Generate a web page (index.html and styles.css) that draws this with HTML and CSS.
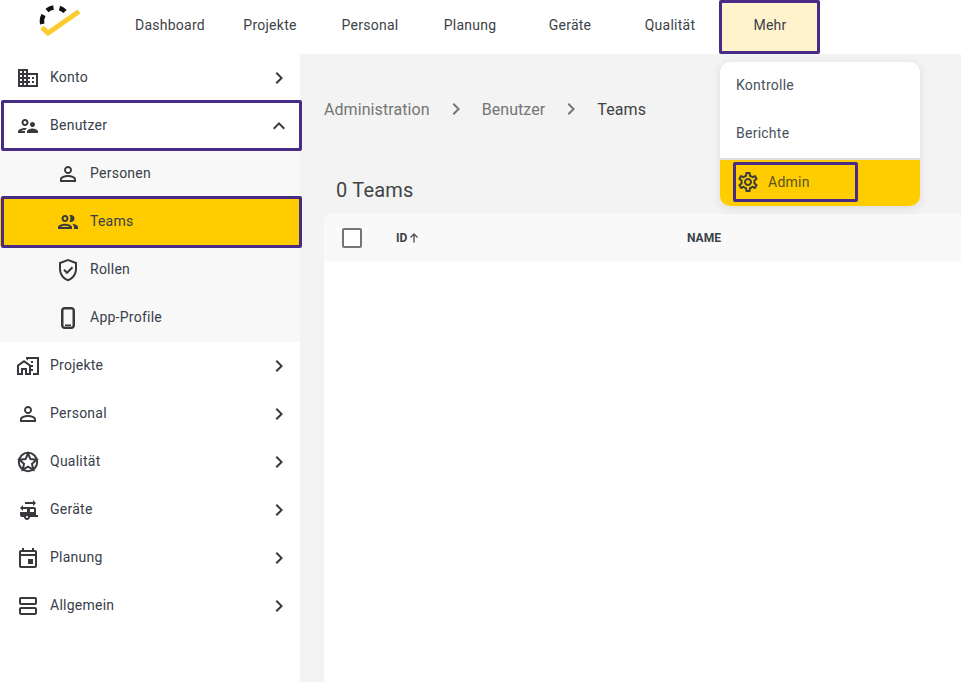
FILE: index.html
```html
<!DOCTYPE html>
<html lang="de">
<head>
<meta charset="utf-8">
<title>Teams</title>
<link rel="stylesheet" href="styles.css">
</head>
<body>
<svg class="defs" width="0" height="0" aria-hidden="true">
  <symbol id="i-chev" viewBox="0 0 24 24"><path d="M10 6 8.590 7.410 13.170 12l-4.580 4.590L10 18l6-6z"/></symbol>
</svg>
<header class="topbar">
  <div class="logo">
    <svg width="48" height="40" viewBox="0 0 48 40">
      <path class="logo-check" d="M8 27.500 L14 33 L45 11.500"/>
      <path class="logo-arc" d="M8.300 24 A13 13 0 0 1 9.500 15 M13 10.500 A13 13 0 0 1 19.500 7.500 M25.500 8 A13 13 0 0 1 31 11.500"/>
    </svg>
  </div>
  <nav class="topnav">
    <a class="topnav-item">Dashboard</a>
    <a class="topnav-item">Projekte</a>
    <a class="topnav-item">Personal</a>
    <a class="topnav-item">Planung</a>
    <a class="topnav-item">Geräte</a>
    <a class="topnav-item">Qualität</a>
    <a class="topnav-item is-open callout">Mehr
      <div class="dropdown">
        <div class="dropdown-item">Kontrolle</div>
        <div class="dropdown-item">Berichte</div>
        <div class="dropdown-admin">
          <div class="admin-link callout">
            <svg class="icon" viewBox="0 0 24 24"><path d="M19.430 12.980c.04-.32.07-.64.07-.98 0-.34-.03-.66-.07-.98l2.110-1.650c.19-.15.24-.42.12-.64l-2-3.460c-.09-.16-.26-.25-.44-.25-.06 0-.12.01-.17.03l-2.490 1c-.52-.4-1.080-.73-1.690-.98l-.38-2.650C14.460 2.180 14.250 2 14 2h-4c-.25 0-.46.18-.49.42l-.38 2.650c-.61.25-1.170.59-1.690.98l-2.490-1c-.06-.02-.12-.03-.18-.03-.17 0-.34.09-.43.25l-2 3.460c-.13.22-.07.49.12.64l2.110 1.650c-.04.32-.07.65-.07.98 0 .33.03.66.07.98l-2.110 1.650c-.19.15-.24.42-.12.64l2 3.460c.09.16.26.25.44.25.06 0 .12-.01.17-.03l2.490-1c.52.4 1.080.73 1.690.98l.38 2.650c.03.24.24.42.49.42h4c.25 0 .46-.18.49-.42l.38-2.650c.61-.25 1.170-.59 1.690-.98l2.490 1c.06.02.12.03.18.03.17 0 .34-.09.43-.25l2-3.460c.12-.22.07-.49-.12-.64l-2.110-1.650zm-1.980-1.710c.04.31.05.52.05.73 0 .21-.02.43-.05.73l-.14 1.130.89.7 1.080.84-.7 1.210-1.270-.51-1.040-.42-.9.68c-.43.32-.84.56-1.250.73l-1.060.43-.16 1.130-.2 1.350h-1.400l-.19-1.350-.16-1.130-1.060-.43c-.43-.18-.83-.41-1.230-.71l-.91-.7-1.060.43-1.270.51-.7-1.210 1.080-.84.89-.7-.14-1.130c-.03-.31-.05-.54-.05-.74s.02-.43.05-.73l.14-1.130-.89-.7-1.080-.84.7-1.210 1.270.51 1.040.42.9-.68c.43-.32.84-.56 1.250-.73l1.060-.43.16-1.130.2-1.350h1.390l.19 1.350.16 1.130 1.060.43c.43.18.83.41 1.230.71l.91.7 1.060-.43 1.270-.51.7 1.210-1.070.85-.89.7.14 1.130zM12 8c-2.210 0-4 1.790-4 4s1.790 4 4 4 4-1.790 4-4-1.790-4-4-4zm0 6c-1.100 0-2-.9-2-2s.9-2 2-2 2 .9 2 2-.9 2-2 2z"/></svg>
            <span>Admin</span>
          </div>
        </div>
      </div>
    </a>
  </nav>
</header>
<div class="main">
  <aside class="sidebar">
    <div class="row">
      <svg class="icon" viewBox="0 0 24 24"><path d="M12 7V3H2v18h20V7H12zM6 19H4v-2h2v2zm0-4H4v-2h2v2zm0-4H4V9h2v2zm0-4H4V5h2v2zm4 12H8v-2h2v2zm0-4H8v-2h2v2zm0-4H8V9h2v2zm0-4H8V5h2v2zm10 12h-8v-2h2v-2h-2v-2h2v-2h-2V9h8v10zm-2-8h-2v2h2v-2zm0 4h-2v2h2v-2z"/></svg>
      <span class="row-label">Konto</span>
      <svg class="icon chev"><use href="#i-chev"/></svg>
    </div>
    <div class="row callout">
      <svg class="icon" viewBox="0 0 24 24"><path d="M9 12c1.930 0 3.500-1.570 3.500-3.500S10.930 5 9 5 5.500 6.570 5.500 8.500 7.070 12 9 12zm0-5c.83 0 1.500.67 1.500 1.500S9.830 10 9 10s-1.500-.67-1.500-1.500S8.170 7 9 7zm.05 10H4.770c.99-.5 2.700-1 4.230-1 .11 0 .23.01.34.01.34-.73.93-1.330 1.640-1.810-.73-.13-1.420-.2-1.980-.2-2.340 0-7 1.170-7 3.500V19h7v-1.500c0-.17.02-.34.05-.5zm7.450-2.500c-1.840 0-5.500 1.010-5.500 3V19h11v-1.500c0-1.990-3.660-3-5.500-3zm1.210-1.820c.76-.43 1.290-1.240 1.290-2.180C19 9.120 17.880 8 16.500 8S14 9.120 14 10.500c0 .94.53 1.750 1.290 2.180.36.2.77.32 1.210.32s.85-.12 1.210-.32z"/></svg>
      <span class="row-label">Benutzer</span>
      <svg class="icon chev" viewBox="0 0 24 24"><path d="M12 8l-6 6 1.410 1.410L12 10.830l4.590 4.580L18 14z"/></svg>
    </div>
    <div class="submenu">
      <div class="row sub">
        <svg class="icon" viewBox="0 0 24 24"><path d="M12 5.900c1.160 0 2.100.94 2.100 2.100s-.94 2.100-2.100 2.100S9.900 9.160 9.900 8s.94-2.100 2.100-2.100m0 9c2.970 0 6.100 1.460 6.100 2.100v1.100H5.900V17c0-.64 3.130-2.100 6.100-2.100M12 4C9.790 4 8 5.790 8 8s1.790 4 4 4 4-1.790 4-4-1.790-4-4-4zm0 9c-2.670 0-8 1.340-8 4v3h16v-3c0-2.660-5.330-4-8-4z"/></svg>
        <span class="row-label">Personen</span>
      </div>
      <div class="row sub is-active callout">
        <svg class="icon" viewBox="0 0 24 24"><path d="M9 13.750c-2.340 0-7 1.170-7 3.500V19h14v-1.750c0-2.330-4.660-3.500-7-3.500zM4.340 17c.84-.58 2.870-1.250 4.660-1.250s3.820.67 4.660 1.250H4.340zM9 12c1.930 0 3.500-1.570 3.500-3.500S10.930 5 9 5 5.500 6.570 5.500 8.500 7.070 12 9 12zm0-5c.83 0 1.500.67 1.500 1.500S9.830 10 9 10s-1.500-.67-1.500-1.500S8.170 7 9 7zm7.040 6.810c1.160.84 1.960 1.960 1.960 3.440V19h4v-1.750c0-2.020-3.500-3.170-5.960-3.440zM15 12c1.930 0 3.500-1.570 3.500-3.500S16.930 5 15 5c-.54 0-1.040.13-1.500.35.63.89 1 1.980 1 3.150s-.37 2.260-1 3.150c.46.22.96.35 1.500.35z"/></svg>
        <span class="row-label">Teams</span>
      </div>
      <div class="row sub">
        <svg class="icon" viewBox="0 0 24 24"><path d="M12 1 3 4.300v6.800c0 5.600 3.800 10.800 9 12.100 5.200-1.300 9-6.500 9-12.100V4.300L12 1zm7 10.100c0 4.600-3 8.800-7 10-4-1.200-7-5.400-7-10V5.700l7-2.600 7 2.600v5.400z"/><path class="line" d="M8 11.800l3 3 5.500-5.500"/></svg>
        <span class="row-label">Rollen</span>
      </div>
      <div class="row sub">
        <svg class="icon" viewBox="0 0 24 24"><path d="M8.500 1h7C17.400 1 19 2.600 19 4.500v15c0 1.900-1.600 3.500-3.500 3.500h-7C6.600 23 5 21.400 5 19.500v-15C5 2.600 6.600 1 8.500 1zm0 2.500c-.6 0-1 .4-1 1v15c0 .6.4 1 1 1h7c.6 0 1-.4 1-1v-15c0-.6-.4-1-1-1h-7zm.5 15h6v1.500H9z"/></svg>
        <span class="row-label">App-Profile</span>
      </div>
    </div>
    <div class="row">
      <svg class="icon" viewBox="0 0 24 24"><path d="M1 11v10h6v-5h2v5h6V11L8 6l-7 5zm12 8h-2v-5H5v5H3v-7l5-3.500 5 3.500v7zm4-12h-2v2h2V7zm0 4h-2v2h2v-2zm0 4h-2v2h2v-2zM10 3v1.970l2 1.430V5h9v14h-4v2h6V3z"/></svg>
      <span class="row-label">Projekte</span>
      <svg class="icon chev"><use href="#i-chev"/></svg>
    </div>
    <div class="row">
      <svg class="icon" viewBox="0 0 24 24"><path d="M12 5.900c1.160 0 2.100.94 2.100 2.100s-.94 2.100-2.100 2.100S9.900 9.160 9.900 8s.94-2.100 2.100-2.100m0 9c2.970 0 6.100 1.460 6.100 2.100v1.100H5.900V17c0-.64 3.130-2.100 6.100-2.100M12 4C9.790 4 8 5.790 8 8s1.790 4 4 4 4-1.790 4-4-1.790-4-4-4zm0 9c-2.670 0-8 1.340-8 4v3h16v-3c0-2.660-5.330-4-8-4z"/></svg>
      <span class="row-label">Personal</span>
      <svg class="icon chev"><use href="#i-chev"/></svg>
    </div>
    <div class="row">
      <svg class="icon" viewBox="0 0 24 24"><circle class="line" cx="12" cy="12" r="9.200"/><path class="line" d="M12 3.500 14.500 9.100 20.600 9.700 16 13.800 17.300 19.800 12 16.700 6.700 19.800 8 13.800 3.400 9.700 9.500 9.100z"/></svg>
      <span class="row-label">Qualität</span>
      <svg class="icon chev"><use href="#i-chev"/></svg>
    </div>
    <div class="row">
      <svg class="icon" viewBox="0 0 24 24"><path d="M20 17v-6c0-1.100-.9-2-2-2H7V7l-3 3 3 3v-2h4v3H4v3c0 1.100.9 2 2 2h2c0 1.660 1.340 3 3 3s3-1.340 3-3h8v-2h-2zm-9 3c-.55 0-1-.45-1-1s.45-1 1-1 1 .45 1 1-.45 1-1 1zm7-6h-4v-3h4v3zM17 2v2H9v2h8v2l3-3z"/></svg>
      <span class="row-label">Geräte</span>
      <svg class="icon chev"><use href="#i-chev"/></svg>
    </div>
    <div class="row">
      <svg class="icon" viewBox="0 0 24 24"><path d="M19 4h-1V2h-2v2H8V2H6v2H5c-1.110 0-2 .9-2 2v14c0 1.100.89 2 2 2h14c1.100 0 2-.9 2-2V6c0-1.100-.9-2-2-2zm0 16H5V10h14v10zM5 8V6h14v2H5zm7 5h5v5h-5z"/></svg>
      <span class="row-label">Planung</span>
      <svg class="icon chev"><use href="#i-chev"/></svg>
    </div>
    <div class="row">
      <svg class="icon" viewBox="0 0 24 24"><path d="M5 3h14c1.100 0 2 .9 2 2v4c0 1.100-.9 2-2 2H5c-1.100 0-2-.9-2-2V5c0-1.100.9-2 2-2zm0 2v4h14V5H5zm0 8h14c1.100 0 2 .9 2 2v4c0 1.100-.9 2-2 2H5c-1.100 0-2-.9-2-2v-4c0-1.100.9-2 2-2zm0 2v4h14v-4H5z"/></svg>
      <span class="row-label">Allgemein</span>
      <svg class="icon chev"><use href="#i-chev"/></svg>
    </div>
  </aside>
  <main class="content">
    <div class="crumbs">
      <span>Administration</span>
      <svg class="icon"><use href="#i-chev"/></svg>
      <span>Benutzer</span>
      <svg class="icon"><use href="#i-chev"/></svg>
      <span class="crumb-current">Teams</span>
    </div>
    <h1 class="title">0 Teams</h1>
    <div class="table">
      <div class="thead">
        <span class="checkbox"></span>
        <span class="th th-id">ID<svg class="sort" viewBox="0 0 12 12"><path d="M6 10.500V2M2.500 5.500 6 2l3.500 3.500"/></svg></span>
        <span class="th">NAME</span>
      </div>
    </div>
  </main>
</div>
</body>
</html>
```
FILE: styles.css
```css
* { box-sizing: border-box; }
html, body { margin: 0; height: 100%; }
body {
  width: 961px;
  height: 682px;
  overflow: hidden;
  display: flex;
  flex-direction: column;
  background: #fff;
  color: #37404a;
  font-family: Roboto, "Liberation Sans", sans-serif;
  font-size: 14px;
  font-weight: 450;
  letter-spacing: .25px;
}
.defs { position: absolute; }
.icon { width: 24px; height: 24px; flex: none; fill: #37393d; }
.callout { position: relative; }
.callout::after {
  content: "";
  position: absolute;
  border: 3px solid #472b85;
  border-radius: 2px;
  pointer-events: none;
}

.topbar { height: 54px; flex: none; display: flex; }
.logo { width: 120px; flex: none; padding: 0 0 0 34px; }
.logo svg { display: block; margin: 0; }
.logo-check { fill: none; stroke: #fbcc2f; stroke-width: 5; }
.logo-arc { fill: none; stroke: #111; stroke-width: 4.500; }
.topnav { display: flex; }
.topnav-item {
  width: 100px;
  height: 54px;
  padding-bottom: 4px;
  display: flex;
  align-items: center;
  justify-content: center;
  color: #3c4248;
}
.is-open { background: #fff3cd; }
.is-open::after { left: -1px; right: 0; top: 0; bottom: 0; }
.dropdown {
  position: absolute;
  z-index: 5;
  top: 62px;
  left: 0;
  width: 200px;
  height: 144px;
  border-radius: 10px;
  background: #fff;
  overflow: hidden;
  box-shadow: 0 2px 10px rgba(0, 0, 0, .1);
  font-weight: 400;
}
.dropdown-item { height: 48px; padding: 0 16px 2px; display: flex; align-items: center; color: #48525c; }
.dropdown-admin {
  height: 48px;
  border-top: 2px solid #e0e0e0;
  background: #ffcc00;
  padding: 2px 0 0 16px;
}
.admin-link { display: flex; align-items: center; gap: 8px; width: 120px; height: 40px; color: #5b5326; }
.admin-link .icon { fill: #3d3e3a; }
.admin-link::after { left: -3px; right: -2px; top: 0; bottom: 0; }

.main { flex: 1; min-height: 0; display: flex; }
.sidebar { width: 300px; flex: none; background: #fff; }
.row { height: 48px; display: flex; align-items: center; padding: 0 9px 0 16px; }
.row-label { flex: 1; margin-left: 10px; padding-bottom: 2px; }
.row.callout::after { left: 1px; right: -2px; top: -2px; bottom: -1px; }
.is-active.callout::after { bottom: -2px; }
.submenu { background: #f8f8f8; }
.sub { padding-left: 56px; }
.is-active { background: #ffcc00; }
.line { fill: none; stroke: #37393d; stroke-width: 2; }

.content { flex: 1; min-width: 0; background: #f3f3f3; padding: 0 0 0 24px; }
.crumbs {
  height: 24px;
  margin-top: 43px;
  display: flex;
  align-items: center;
  gap: 14px;
  font-size: 16px;
  letter-spacing: .08px;
  color: #757575;
}
.crumbs .icon { fill: #757575; }
.crumb-current { color: #424242; }
.title { margin: 57px 0 0 12px; height: 24px; font-size: 20px; line-height: 24px; font-weight: 400; letter-spacing: .2px; color: #3f4347; }
.table { margin-top: 12px; height: 500px; background: #fff; border-radius: 8px 0 0 0; overflow: hidden; }
.thead { height: 48px; background: #f9f9f9; display: flex; align-items: center; padding-left: 18px; }
.checkbox { width: 20px; height: 20px; border: 2px solid #757575; border-radius: 2px; background: #fff; flex: none; }
.th { font-size: 12px; font-weight: 700; color: #3c4248; letter-spacing: 0; }
.th-id { width: 291px; margin-left: 34px; display: flex; align-items: center; gap: 1px; }
.sort { width: 12px; height: 12px; fill: none; stroke: #555; stroke-width: 1.400; }
```
